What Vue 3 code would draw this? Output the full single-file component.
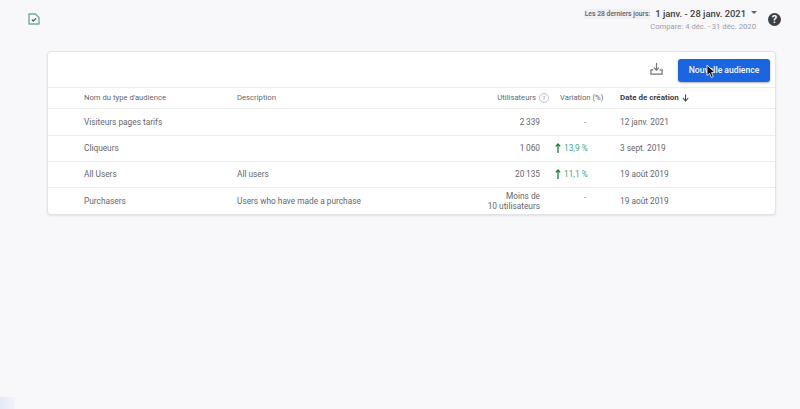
<script setup>
const rows = [
  { name: 'Visiteurs pages tarifs', desc: '', users: '2\u2009339', trend: '', date: '12 janv. 2021', h: 'tall' },
  { name: 'Cliqueurs', desc: '', users: '1\u2009060', trend: '13,9 %', date: '3 sept. 2019', h: '' },
  { name: 'All Users', desc: 'All users', users: '20\u2009135', trend: '11,1 %', date: '19 août 2019', h: '' },
  { name: 'Purchasers', desc: 'Users who have made a purchase', users: 'Moins de\n10 utilisateurs', trend: '', date: '19 août 2019', h: 'tall', last: true },
]
</script>

<template>
  <div class="page">
    <header class="top">
      <svg class="doc" width="12" height="12" viewBox="0 0 12 12" fill="none">
        <path d="M1 1h6.5L11 4.5V11H1z" stroke="#6fae94" stroke-width="1.4" stroke-linejoin="round" />
        <path d="M3.8 6.6l1.5 1.4 2.8-2.6" stroke="#3c4043" stroke-width="1.1" />
      </svg>
      <div class="range">
        <div class="range-main">
          <span class="preset">Les 28 derniers jours:</span>
          <span class="dates">1 janv. - 28 janv. 2021</span>
          <span class="caret"></span>
        </div>
        <div class="compare">Compare: 4 déc. - 31 déc. 2020</div>
      </div>
      <span class="help">?</span>
    </header>

    <section class="card">
      <div class="toolbar">
        <svg class="download" width="13" height="13" viewBox="0 0 14 14" fill="none" stroke="#70757a" stroke-width="1.3">
          <path d="M7 1v7.5M4.2 6l2.8 2.8L9.8 6" />
          <path d="M3.6 8.5H1V13h12V8.5h-2.6" />
        </svg>
        <button class="primary">
          Nouvelle audience
          <svg class="cursor" width="10" height="15" viewBox="0 0 10 15">
            <path d="M1 1v10.5l2.6-2.2 1.7 4.2 2-.8-1.7-4.1H9z" fill="#111" stroke="#fff" stroke-width=".8" />
          </svg>
        </button>
      </div>

      <div class="row head">
        <div>Nom du type d'audience</div>
        <div>Description</div>
        <div class="users-head">Utilisateurs <span class="q">?</span></div>
        <div class="var-head">Variation (%)</div>
        <div class="date-head">Date de création
          <svg width="7" height="8" viewBox="0 0 7 8" fill="none" stroke="#3c4043" stroke-width="1.1">
            <path d="M3.5 .5v6.5M.8 4l2.7 3 2.7-3" />
          </svg>
        </div>
      </div>

      <div v-for="r in rows" :key="r.name" class="row body" :class="[r.h, { last: r.last }]">
        <div>{{ r.name }}</div>
        <div>{{ r.desc }}</div>
        <div class="users">{{ r.users }}</div>
        <div class="var">
          <template v-if="r.trend">
            <svg width="6" height="10" viewBox="0 0 6 10" fill="none" stroke="#188038" stroke-width="1.3">
              <path d="M3 10V1.2M.8 3.4L3 1l2.2 2.4" />
            </svg>
            <span>{{ r.trend }}</span>
          </template>
          <span v-else class="dash" :class="{ up: r.last }">-</span>
        </div>
        <div>{{ r.date }}</div>
      </div>
    </section>
    <div class="artifact"></div>
  </div>
</template>

<style>
body { margin: 0; background: #f8f8fa; }
</style>

<style scoped>
.page {
  position: relative;
  width: 800px;
  height: 409px;
  overflow: hidden;
  background: #f8f8fa;
  font-family: Roboto, "Liberation Sans", sans-serif;
  color: #5f6368;
}
.top {
  height: 51px;
  display: flex;
  align-items: flex-start;
  box-sizing: border-box;
  padding: 8px 19px 0 28px;
}
.doc { margin-top: 5px; }
.range { margin-left: auto; width: 172px; display: flex; flex-direction: column; align-items: flex-end; padding-right: 11px; box-sizing: border-box; }
.range-main { display: flex; align-items: center; height: 11px; white-space: nowrap; }
.preset {
  font-size: 6.8px;
  font-weight: 500;
  color: #5f6368;
  background: #f0f0f2;
  line-height: 10px;
  padding-left: 1px;
}
.dates {
  margin-left: 5px;
  font-size: 9.4px;
  font-weight: 500;
  color: #3c4043;
}
.caret {
  margin: -2px 0 0 5px;
  width: 0;
  height: 0;
  border-left: 3px solid transparent;
  border-right: 3px solid transparent;
  border-top: 3px solid #5f6368;
}
.compare { margin-top: 3px; font-size: 7.7px; line-height: 10px; color: #9aa0a6; white-space: nowrap; margin-right: 1px; }
.help {
  margin-top: 5px;
  width: 13px;
  height: 13px;
  border-radius: 50%;
  background: #3c4043;
  color: #f8f8fa;
  font-size: 11px;
  font-weight: 700;
  line-height: 13px;
  text-align: center;
}
.card {
  margin-left: 47px;
  width: 729px;
  height: 164px;
  box-sizing: border-box;
  background: #fff;
  border: 1px solid #e2e3e5;
  border-radius: 4px;
  box-shadow: 0 1px 2px rgba(60, 64, 67, .12);
}
.toolbar {
  height: 35px;
  display: flex;
  align-items: center;
  justify-content: flex-end;
  padding-right: 5px;
  box-sizing: border-box;
}
.download { margin-right: 15px; margin-bottom: 3px; }
.primary {
  position: relative;
  width: 92px;
  height: 23px;
  margin-top: 1px;
  padding: 0;
  border: 0;
  border-radius: 3px;
  background: #1a66e0;
  color: #f4f8ff;
  font: 500 8.6px Roboto, sans-serif;
  box-shadow: 0 1px 2px rgba(60, 64, 67, .4);
}
.cursor { position: absolute; left: 28px; top: 5px; }
.row {
  display: grid;
  grid-template-columns: 153px 213px 90px 80px 1fr;
  padding-left: 36px;
  padding-bottom: 1px;
  align-items: center;
  font-size: 8.3px;
  border-top: 1px solid #eceded;
  color: #63676b;
  box-sizing: border-box;
}
.head { height: 21px; font-size: 7.7px; }
.body { height: 26px; }
.body.tall { height: 27px; }
.users-head { display: flex; justify-content: flex-end; align-items: center; gap: 3px; margin-right: -9px; white-space: nowrap; }
.q {
  width: 8px;
  height: 8px;
  border: 1px solid #bdc1c6;
  border-radius: 50%;
  color: #9aa0a6;
  font-size: 6px;
  line-height: 8px;
  text-align: center;
}
.var-head { padding-left: 20px; white-space: nowrap; margin-right: -20px; }
.date-head { color: #3c4043; font-size: 8px; font-weight: 700; display: flex; align-items: center; gap: 3px; }
.users { text-align: right; white-space: pre-line; line-height: 10px; }
.var {
  display: flex;
  align-items: center;
  gap: 3px;
  padding-left: 15px;
  color: #45a585;
}
.dash { color: #80868b; margin-left: 29px; }
.dash.up { margin-top: -7px; }
.artifact {
  position: absolute;
  left: 0;
  bottom: 0;
  width: 15px;
  height: 12px;
  background: linear-gradient(90deg, #e4e9f6, #f3f4fa);
}
</style>
